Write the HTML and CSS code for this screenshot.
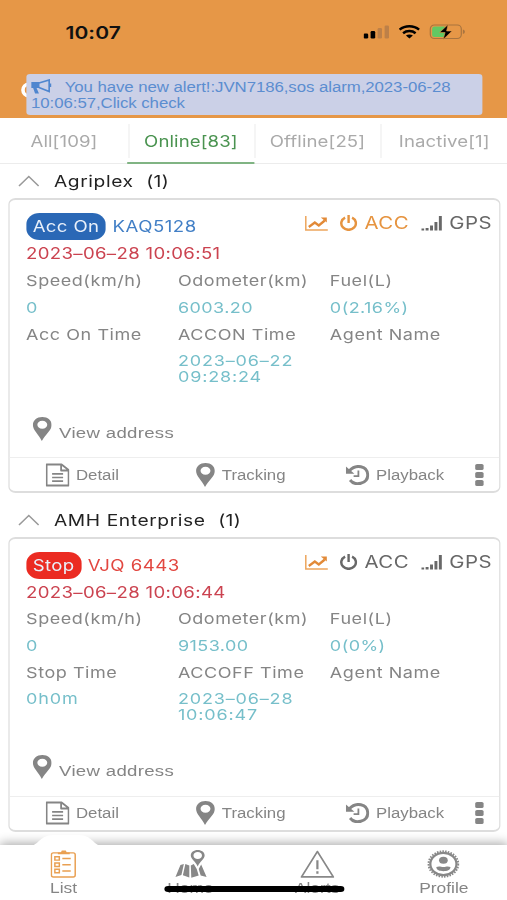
FILE: index.html
```html
<!DOCTYPE html>
<html lang="en">
<head>
<meta charset="utf-8">
<title>Vehicle list</title>
<link rel="stylesheet" href="styles.css">
</head>
<body>
<svg class="defs" aria-hidden="true">
  <symbol id="chart" viewBox="0 0 24 16" preserveAspectRatio="none"><path d="M1 1v14h22" fill="none" stroke="#eda55c" stroke-width="1.500"/><path d="M4 12l6-4.500 4 3 6-5" fill="none" stroke="#e28a38" stroke-width="2.300"/><path d="M16 2.500h6v5z" fill="#e28a38"/></symbol>
  <symbol id="power" viewBox="0 0 18 16" preserveAspectRatio="none"><path d="M5.500 2.600A7.300 6.500 0 1 0 12.500 2.600" fill="none" stroke="currentColor" stroke-width="2.500"/><path d="M9 0v8" stroke="currentColor" stroke-width="2.400"/></symbol>
  <symbol id="signal" viewBox="0 0 22 16" preserveAspectRatio="none"><path d="M0 13.500h3v2H0zM4.500 13h3v2.500h-3zM9 10.500h3v5H9zM13.500 7h3v8.500h-3zM18 1h3v14.500h-3z" fill="currentColor"/></symbol>
  <symbol id="pin" viewBox="0 0 20 24" preserveAspectRatio="none"><path fill-rule="evenodd" d="M10 0C4.400 0 .5 3.500.5 8c0 5 5.500 9 9 16 4-7 10-11 10-16C19.500 3.500 15.600 0 10 0zm0 3.800c2.900 0 5 1.700 5 4s-2.100 4-5 4-5-1.700-5-4 2.100-4 5-4z" fill="currentColor"/></symbol>
  <symbol id="doc" viewBox="0 0 24 24" preserveAspectRatio="none"><path d="M1 1.500h15l7 5.500v15.500H1zM15.500 1.500v6H23" fill="none" stroke="currentColor" stroke-width="1.800" stroke-linejoin="round"/><path d="M6.500 10.800h11M6.500 14.500h11M6.500 18.200h11" stroke="currentColor" stroke-width="1.700"/></symbol>
  <symbol id="history" viewBox="0 0 24 20" preserveAspectRatio="none"><path d="M4 5.500C10-1 22 .5 22.200 10 22 19 9.500 21.500 4.500 15" fill="none" stroke="currentColor" stroke-width="3"/><path d="M.3 1.500v7.300h8.500z" fill="currentColor"/><path d="M12.800 5.500v5.700H8" fill="none" stroke="currentColor" stroke-width="1.800"/></symbol>
</svg>
<div class="screen">
  <header class="header">
    <div class="statusbar">
      <span class="clock">10:07</span>
      <svg class="sys" viewBox="0 0 102 16" preserveAspectRatio="none">
        <rect x="0" y="9.500" width="4.600" height="5" rx="1.300"/>
        <rect x="7" y="7" width="4.600" height="7.500" rx="1.300"/>
        <g fill="#bd8048"><rect x="14" y="4" width="4.400" height="10.500" rx="1.300"/><rect x="21" y="1.500" width="4.400" height="13" rx="1.300"/></g>
        <g fill="none" stroke="#000" stroke-width="2.500"><path d="M36 5.600C41.500 1 50 1 55.500 5.600"/><path d="M39.500 9.200C43 6.300 48.500 6.300 52 9.200"/></g>
        <path d="M42.300 11.600c2-1.500 5-1.500 7 0l-3.500 3z"/>
        <rect x="66.700" y="1" width="31" height="13.500" rx="4" fill="none" stroke="#a8743f" stroke-width="1.200"/>
        <rect x="68.500" y="2.600" width="14" height="10.300" rx="2.500" fill="#62c863"/>
        <path d="M99.300 5.500q2 .2 2 2.200t-2 2.200z" fill="#a8743f"/>
        <path d="M84.500.5l-8.500 8h5.500l-2 7 9-8.500h-5.500z" stroke="#e69747" stroke-width=".6"/>
      </svg>
    </div>
    <svg class="search" viewBox="0 0 14 16" preserveAspectRatio="none"><ellipse cx="8" cy="8" rx="5.500" ry="5.800" fill="none" stroke="#fff" stroke-width="3.500"/></svg>
    <div class="alert">
      <svg class="horn" viewBox="0 0 21 15" preserveAspectRatio="none"><path d="M0 3h8.500v6H5.500l2.500 5.500H4L2 9H0z" fill="#4f86cf"/><path d="M8 4L18.500 1v11.500L8 8.500" fill="none" stroke="#4f86cf" stroke-width="1.700"/><path d="M20 4.500v3.500" stroke="#4f86cf" stroke-width="1.500"/></svg><span>You have new alert!:JVN7186,sos alarm,2023-06-28 <br>10:06:57,Click check</span>
    </div>
  </header>

  <nav class="tabs">
    <span class="tab">All[109]</span>
    <span class="tab active">Online[83]</span>
    <span class="tab">Offline[25]</span>
    <span class="tab">Inactive[1]</span>
  </nav>

  <main class="list">
    <section class="group">
      <h2 class="group-title"><svg class="caret" viewBox="0 0 22 12" preserveAspectRatio="none"><path d="M1 11L11 1.500 21 11" fill="none" stroke="#999" stroke-width="1.600"/></svg><span>Agriplex</span><span class="count">(1)</span></h2>
      <article class="card on">
        <div class="body">
          <div class="top">
            <span class="pill">Acc On</span><span class="plate">KAQ5128</span>
            <div class="state">
              <svg class="i-chart"><use href="#chart"/></svg>
              <svg class="i-power acc"><use href="#power"/></svg><span class="acc">ACC</span>
              <svg class="i-signal"><use href="#signal"/></svg><span>GPS</span>
            </div>
          </div>
          <div class="stamp">2023–06–28 10:06:51</div>
          <div class="grid">
            <span>Speed(km/h)</span><span>Odometer(km)</span><span>Fuel(L)</span>
            <b>0</b><b>6003.20</b><b>0(2.16%)</b>
            <span>Acc On Time</span><span>ACCON Time</span><span>Agent Name</span>
            <b class="multi"></b><b class="multi">2023–06–22<br>09:28:24</b><b class="multi"></b>
          </div>
          <div class="address"><svg class="i-pin"><use href="#pin"/></svg><span>View address</span></div>
        </div>
        <footer class="actions">
          <span class="act detail"><svg class="i-doc"><use href="#doc"/></svg>Detail</span>
          <span class="act track"><svg class="i-pin"><use href="#pin"/></svg>Tracking</span>
          <span class="act play"><svg class="i-history"><use href="#history"/></svg>Playback</span>
          <span class="more"><i></i><i></i><i></i></span>
        </footer>
      </article>
    </section>

    <section class="group">
      <h2 class="group-title"><svg class="caret" viewBox="0 0 22 12" preserveAspectRatio="none"><path d="M1 11L11 1.500 21 11" fill="none" stroke="#999" stroke-width="1.600"/></svg><span>AMH Enterprise</span><span class="count">(1)</span></h2>
      <article class="card stop">
        <div class="body">
          <div class="top">
            <span class="pill">Stop</span><span class="plate">VJQ 6443</span>
            <div class="state">
              <svg class="i-chart"><use href="#chart"/></svg>
              <svg class="i-power acc"><use href="#power"/></svg><span class="acc">ACC</span>
              <svg class="i-signal"><use href="#signal"/></svg><span>GPS</span>
            </div>
          </div>
          <div class="stamp">2023–06–28 10:06:44</div>
          <div class="grid">
            <span>Speed(km/h)</span><span>Odometer(km)</span><span>Fuel(L)</span>
            <b>0</b><b>9153.00</b><b>0(0%)</b>
            <span>Stop Time</span><span>ACCOFF Time</span><span>Agent Name</span>
            <b class="multi">0h0m</b><b class="multi">2023–06–28<br>10:06:47</b><b class="multi"></b>
          </div>
          <div class="address"><svg class="i-pin"><use href="#pin"/></svg><span>View address</span></div>
        </div>
        <footer class="actions">
          <span class="act detail"><svg class="i-doc"><use href="#doc"/></svg>Detail</span>
          <span class="act track"><svg class="i-pin"><use href="#pin"/></svg>Tracking</span>
          <span class="act play"><svg class="i-history"><use href="#history"/></svg>Playback</span>
          <span class="more"><i></i><i></i><i></i></span>
        </footer>
      </article>
    </section>
  </main>

  <nav class="tabbar">
    <svg class="bump" viewBox="0 0 70 12" preserveAspectRatio="none"><path d="M0 12C8 10 9 1.500 22 1h26c13 .5 14 9 22 11z" fill="#fff"/></svg>
    <span class="item">
      <svg class="nav-list" viewBox="0 0 26 29" preserveAspectRatio="none"><g fill="none" stroke="#e9a052" stroke-width="1.500"><rect x="1" y="3" width="24" height="25" rx="2"/><path d="M4.500 7h4.500v3.500H4.500zM4.500 13.500h4.500v3.500H4.500zM4.500 20h4.500v3.500H4.500zM12 8.800h8.500M12 15.300h8.500M12 21.800h8.500"/></g><path d="M7.500 4.500V2.500h3l1-2h4l1 2h3v2z" fill="#e9a052"/></svg>List
    </span>
    <span class="item">
      <svg class="nav-home" viewBox="0 0 34 28" preserveAspectRatio="none"><path fill-rule="evenodd" d="M24 0c-4 0-7 2.300-7 5.500 0 3.800 5 6 7 11 2-5 7-7.200 7-11C31 2.300 28 0 24 0zm0 2c2.500 0 4.300 1.500 4.300 3.500S26.500 9 24 9s-4.300-1.500-4.300-3.500S21.500 2 24 2z" fill="#888"/><path d="M6.500 15l3.500-1-2.500 11-6 2zM11.500 14l4 1.500v12L9 25.300zM17 15.500l3-1.500 3 5 2 6.500-7.500 2.300zM25 19l2.500-4.500 5.500 12.500-6-1.500z" fill="#888"/></svg>Home
    </span>
    <span class="item">
      <svg class="nav-alert" viewBox="0 0 36 27" preserveAspectRatio="none"><path d="M18 1.500L34.500 26h-33z" fill="none" stroke="#888" stroke-width="1.700" stroke-linejoin="round"/><path d="M18 10v8.500M18 20.500v2.500" stroke="#888" stroke-width="2.300"/></svg>Alerts
    </span>
    <span class="item">
      <svg class="nav-profile" viewBox="0 0 32 27" preserveAspectRatio="none"><ellipse cx="16" cy="13.500" rx="14.700" ry="12.200" fill="none" stroke="#888" stroke-width="2" stroke-dasharray="1.500 1.200"/><ellipse cx="16" cy="13.500" rx="12.900" ry="10.700" fill="none" stroke="#888" stroke-width="2.200"/><ellipse cx="16" cy="9.800" rx="4.300" ry="3.400" fill="#888"/><path d="M9 16.500c3-1.500 4.500 0 7 0s4-1.500 7 0c0 3-3.500 4-7 4s-7-1-7-4z" fill="#888"/></svg>Profile
    </span>
    <div class="indicator"></div>
  </nav>
</div>
</body>
</html>
```
FILE: styles.css
```css
* { box-sizing: border-box; }
body { margin: 0; background: #fff; overflow: hidden; }
.defs { display: none; }
svg { display: block; flex: none; }

.screen {
  position: relative;
  width: 422.5px;
  height: 900px;
  overflow: hidden;
  display: flex;
  flex-direction: column;
  transform: scaleX(1.2);
  transform-origin: 0 0;
  font-family: Inter, "Liberation Sans", sans-serif;
  color: #858585;
}

.header { position: relative; flex: none; height: 118px; background: #e69747; }
.statusbar {
  display: flex;
  justify-content: space-between;
  align-items: center;
  height: 64px;
  padding: 0 35px 0 54.5px;
}
.clock { color: #111; font-size: 17.5px; font-weight: 600; letter-spacing: .1px; }
.sys { width: 85px; height: 16px; }
.search { position: absolute; left: 16.5px; top: 82px; width: 12px; height: 16px; }
.alert {
  position: absolute;
  left: 21.7px;
  top: 73.5px;
  width: 380px;
  height: 41.5px;
  padding: 5px 0 0 4.2px;
  border-radius: 3px;
  background: #cbd0e7;
  color: #5b8dd0;
  font: 14px/16px "Liberation Sans", sans-serif;
  letter-spacing: -.05px;
  white-space: nowrap;
}
.horn { float: left; width: 17px; height: 15px; margin-right: 11px; }

.tabs { display: grid; grid-template-columns: repeat(4, 1fr); flex: none; height: 46px; border-bottom: 1px solid #ececec; }
.tab { position: relative; display: flex; align-items: center; justify-content: center; padding: 1px 0 0 1px; font-size: 15.5px; letter-spacing: .08px; color: #aaa; }
.tab + .tab::before { content: ""; position: absolute; left: .5px; top: 6px; height: 34px; border-left: 1px solid #eee; }
.tab.active { color: #4a9350; margin: 0 -.8px -1px .5px; padding: 2.5px 0 0; border-bottom: 2px solid #80b483; }

.group { padding-bottom: 9.5px; }
.group-title {
  display: flex;
  align-items: center;
  height: 34px;
  margin: 0;
  padding-left: 15px;
  font-size: 16px;
  font-weight: 400;
  letter-spacing: .5px;
  color: #222;
}
.caret { width: 18px; height: 12px; margin-right: 12px; }
.count { margin-left: 10.5px; letter-spacing: .3px; }

.card {
  display: flex;
  flex-direction: column;
  width: 410px;
  height: 295px;
  margin-left: 6.5px;
  border: 2px solid #ddd;
  border-left-width: 1.6px;
  border-right-width: 1.6px;
  border-radius: 6px;
}
.body { flex: 1; padding: 13px 0 0 14.2px; }
.top { display: flex; height: 27px; }
.pill { height: 27px; padding: 0 5.5px; border-radius: 11px; color: #e9f0fa; font-size: 15.5px; line-height: 27px; letter-spacing: .3px; }
.plate { margin-left: 5.5px; font-size: 15.5px; line-height: 27px; letter-spacing: .42px; }
.on .pill { background: #2a68b6; }
.on .plate { color: #427fc6; }
.stop .pill { background: #eb2b22; }
.stop .plate { color: #e24740; }
.state { display: flex; align-items: center; height: 20px; margin-left: auto; padding-right: 5.5px; font-size: 17px; letter-spacing: .4px; color: #686868; }
.on .acc { color: #e69440; }
.i-chart { width: 20px; height: 16px; margin-right: 9.5px; }
.i-power { width: 15px; height: 16px; margin-right: 5.5px; }
.i-signal { width: 18px; height: 16px; margin: 0 5px 0 10.5px; }
.stamp { height: 26.5px; font-size: 15.5px; line-height: 27px; letter-spacing: .28px; color: #cb4350; }
.grid { display: grid; grid-template-columns: 126.6px 126.6px 1fr; grid-template-rows: 27px 27px 27px 56.5px; font-size: 15px; line-height: 27px; letter-spacing: .46px; }
.grid b { font-weight: 400; color: #76bfca; letter-spacing: .36px; }
.grid .multi { padding-top: 5px; line-height: 16px; letter-spacing: .7px; }
.address { display: flex; height: 32px; padding: 12.500px 0 0 5px; font: 15.5px/32px "Liberation Sans", sans-serif; letter-spacing: .26px; }
.address span { height: 32px; margin-left: 6px; }
.i-pin { width: 16.5px; height: 24px; color: #858585; }
.actions { position: relative; display: flex; align-items: center; height: 34px; border-top: 1px solid #eee; font: 14px "Liberation Sans", sans-serif; }
.act { display: flex; align-items: center; gap: 5.5px; }
.detail { width: 125px; margin-left: 30.3px; }
.track { width: 125px; }
.i-doc { width: 20px; height: 24px; }
.i-history { width: 20px; height: 20px; }
.more { display: flex; flex-direction: column; gap: 2px; margin-left: auto; margin-right: 13px; }
.more i { width: 6.5px; height: 6px; border-radius: 1.5px; background: #858585; }

.tabbar {
  position: absolute;
  left: 0;
  top: 845px;
  width: 100%;
  height: 55px;
  display: grid;
  grid-template-columns: repeat(4, 1fr);
  background: #fff;
  box-shadow: 0 -2px 9px rgba(0, 0, 0, .33);
  font: 14.5px/16px "Liberation Sans", sans-serif;
}
.bump { position: absolute; left: 26px; top: -11px; width: 58px; height: 12px; }
.item { position: relative; display: flex; flex-direction: column; align-items: center; padding: 5px 0 0 .4px; }
.item svg { height: 28px; margin-bottom: 2px; }
.nav-list { width: 21.5px; }
.nav-home { width: 28px; }
.nav-alert { width: 29px; }
.nav-profile { width: 27px; }
.indicator { position: absolute; left: 136.700px; top: 41px; width: 150px; height: 5.5px; border-radius: 3px; background: #000; }
```
